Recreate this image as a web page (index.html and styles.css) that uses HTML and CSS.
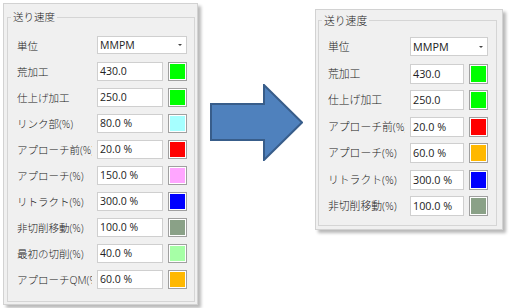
FILE: index.html
```html
<!DOCTYPE html>
<html lang="ja">
<head>
<meta charset="utf-8">
<link rel="stylesheet" href="styles.css">
</head>
<body>
<div class="panel panel-left">
  <fieldset class="group">
    <legend>送り速度</legend>
    <div class="grid">
      <span class="lbl">単位</span>
      <div class="combo"><span>MMPM</span><i class="caret"></i></div>

      <span class="lbl">荒加工</span>
      <div class="field">430.0</div>
      <div class="sw" style="background:#00ff00"></div>

      <span class="lbl">仕上げ加工</span>
      <div class="field">250.0</div>
      <div class="sw" style="background:#00ff00"></div>

      <span class="lbl">リンク部(%)</span>
      <div class="field">80.0 %</div>
      <div class="sw" style="background:#a6ffff"></div>

      <span class="lbl">アプローチ前(%)</span>
      <div class="field">20.0 %</div>
      <div class="sw" style="background:#ff0000"></div>

      <span class="lbl">アプローチ(%)</span>
      <div class="field">150.0 %</div>
      <div class="sw" style="background:#ffa6ff"></div>

      <span class="lbl">リトラクト(%)</span>
      <div class="field">300.0 %</div>
      <div class="sw" style="background:#0000ff"></div>

      <span class="lbl">非切削移動(%)</span>
      <div class="field">100.0 %</div>
      <div class="sw" style="background:#8aa187"></div>

      <span class="lbl">最初の切削(%)</span>
      <div class="field">40.0 %</div>
      <div class="sw" style="background:#a6ffa6"></div>

      <span class="lbl">アプローチQM(%)</span>
      <div class="field">60.0 %</div>
      <div class="sw" style="background:#ffb800"></div>
    </div>
  </fieldset>
</div>

<svg class="arrow" width="93" height="77" viewBox="-1 -1 93 77">
  <path d="M0 19 H53 V0 L91 37.5 L53 75 V55 H0 Z" fill="#4f81bd" stroke="#385d8a" stroke-width="2" stroke-linejoin="miter"/>
</svg>

<div class="panel panel-right">
  <fieldset class="group">
    <legend>送り速度</legend>
    <div class="grid">
      <span class="lbl">単位</span>
      <div class="combo"><span>MMPM</span><i class="caret"></i></div>

      <span class="lbl">荒加工</span>
      <div class="field">430.0</div>
      <div class="sw" style="background:#00ff00"></div>

      <span class="lbl">仕上げ加工</span>
      <div class="field">250.0</div>
      <div class="sw" style="background:#00ff00"></div>

      <span class="lbl">アプローチ前(%)</span>
      <div class="field">20.0 %</div>
      <div class="sw" style="background:#ff0000"></div>

      <span class="lbl">アプローチ(%)</span>
      <div class="field">60.0 %</div>
      <div class="sw" style="background:#ffb800"></div>

      <span class="lbl">リトラクト(%)</span>
      <div class="field">300.0 %</div>
      <div class="sw" style="background:#0000ff"></div>

      <span class="lbl">非切削移動(%)</span>
      <div class="field">100.0 %</div>
      <div class="sw" style="background:#8aa187"></div>
    </div>
  </fieldset>
</div>
</body>
</html>
```
FILE: styles.css
```css
* { box-sizing: border-box; }
html, body { margin: 0; padding: 0; background: #ffffff; }
body {
  width: 513px;
  height: 308px;
  overflow: hidden;
  display: flex;
  align-items: flex-start;
  font-family: "Open Sans", "Noto Sans CJK JP", sans-serif;
  color: #222222;
}

.panel {
  background: #f0f0f0;
  border: 1px solid #d2d2d2;
  box-shadow: 3px 3px 3px rgba(0, 0, 0, 0.28);
}
.panel-left {
  margin: 3px 0 0 3px;
  width: 195px;
  height: 302px;
  font-size: 10.5px;
}
.panel-right {
  margin: 9px 0 0 12px;
  width: 188px;
  height: 221px;
  font-size: 10.8px;
}

.group {
  border: 1px solid #d5d5d5;
  margin: 0;
  padding: 0;
  min-width: 0;
}
.group legend {
  padding: 0 2px;
  line-height: 14px;
  margin-left: -6px;
  font-family: "Noto Sans CJK JP", sans-serif;
  font-weight: 300;
}
.panel-left .group {
  margin: 6px 2px 0 3px;
  padding: 12px 7px 12px 9px;
}
.panel-right .group {
  margin: 3px 5px 0 2px;
  padding: 10px 7px 9px 9px;
}

.grid {
  display: grid;
  column-gap: 5px;
  align-items: center;
}
.panel-left .grid {
  grid-template-columns: 75px 66px 19px;
  grid-auto-rows: 19px;
  row-gap: 7px;
}
.panel-right .grid {
  grid-template-columns: 77px 54px 19px;
  grid-auto-rows: 20px;
  row-gap: 6.5px;
}

.lbl {
  white-space: nowrap;
  overflow: hidden;
  line-height: 14px;
  font-weight: 300;
}

.field, .combo {
  background: #ffffff;
  border: 1px solid #cfcfcf;
  height: 100%;
  line-height: 16px;
  padding-left: 2px;
  white-space: nowrap;
}
.panel-right .field, .panel-right .combo { line-height: 17px; }

.combo {
  grid-column: 2 / 4;
  display: flex;
  align-items: center;
  justify-content: space-between;
  padding-right: 4px;
}
.panel-left .combo { height: 18px; align-self: start; }
.panel-right .combo { height: 19px; align-self: start; }

.caret {
  width: 0;
  height: 0;
  border-left: 2px solid transparent;
  border-right: 2px solid transparent;
  border-top: 2px solid #444;
}

.sw {
  height: 100%;
  border: 1px solid #a0a0a0;
  box-shadow: inset 0 0 0 1px #ffffff;
}

.arrow {
  flex: none;
  margin: 84px 0 0 12px;
}
```
